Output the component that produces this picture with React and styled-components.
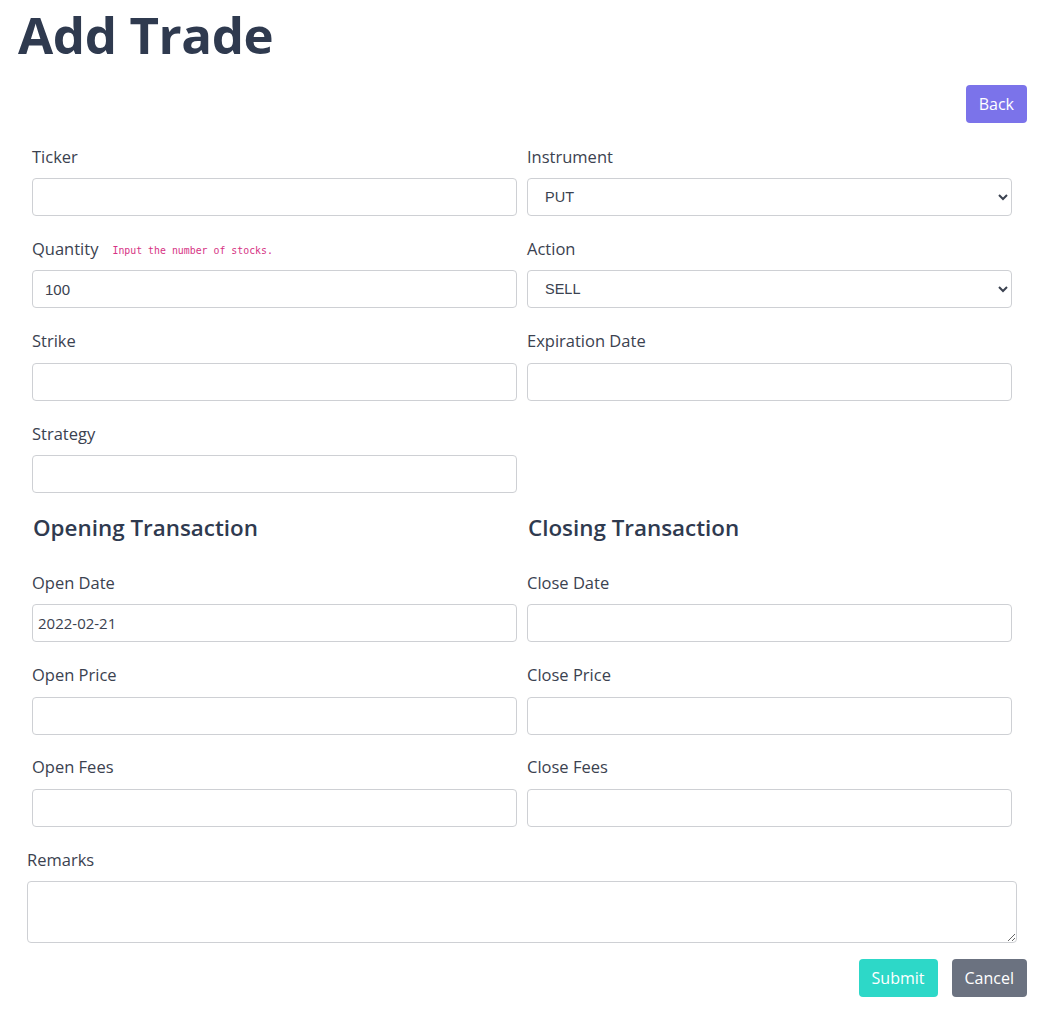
import React from "react";
import styled, { createGlobalStyle } from "styled-components";

const Global = createGlobalStyle`
  html, body { margin: 0; padding: 0; background: #fff; }
  body { font-family: "Open Sans", "Noto Sans", sans-serif; color: #3b4250; }
  * { box-sizing: border-box; }
`;

const Page = styled.div`
  padding: 0 19px 0 18px;
`;

const Title = styled.h1`
  margin: 0;
  padding-top: 2px;
  font-size: 51px;
  line-height: 64px;
  font-weight: 700;
  color: #2f3a4f;
  letter-spacing: -0.4px;
`;

const TopBar = styled.div`
  display: flex;
  justify-content: flex-end;
  margin-top: 19px;
`;

const Button = styled.button`
  height: 38px;
  padding: 0 13px;
  border: none;
  border-radius: 4px;
  font-family: "Open Sans", sans-serif;
  font-size: 16px;
  color: #fff;
  background: ${(p) => p.$bg};
  cursor: pointer;
`;

const Form = styled.form`
  margin-top: 21px;
  padding: 0 10px 0 9px;
`;

const Grid = styled.div`
  display: grid;
  grid-template-columns: 1fr 1fr;
`;

const Field = styled.div`
  padding: 0 5px;
  margin-bottom: ${(p) => (p.$mb != null ? p.$mb : 20.4)}px;
`;

const LabelRow = styled.div`
  display: flex;
  align-items: center;
  height: 24px;
  margin-bottom: ${(p) => p.$mb || 10}px;
`;

const Label = styled.label`
  font-size: 16.5px;
  line-height: 24px;
  padding-top: 1px;
  color: #3b4250;
`;

const Hint = styled.code`
  margin-left: 14px;
  margin-top: 4px;
  font-family: "DejaVu Sans Mono", "Liberation Mono", monospace;
  font-size: 9.9px;
  color: #d63384;
`;

const Input = styled.input`
  display: block;
  width: 100%;
  height: 38px;
  padding: 0 ${(p) => p.$pad || 12}px;
  border: 1px solid #ced0d4;
  border-radius: 4px;
  font-family: ${(p) => (p.$date ? '"Open Sans", sans-serif' : '"Liberation Sans", Arial, sans-serif')};
  font-size: 15px;
  color: #3b4250;
  background: #fff;
  outline: none;
`;

const Select = styled.select`
  display: block;
  width: 100%;
  height: 38px;
  padding: 0 12px 0 13px;
  border: 1px solid #ced0d4;
  border-radius: 4px;
  font-family: "Liberation Sans", Arial, sans-serif;
  font-size: 14.5px;
  color: #3b4250;
  background: #fff;
  outline: none;
`;

const SectionTitle = styled.h3`
  margin: 19px 0 26px;
  padding: 0 6px;
  font-size: 22.4px;
  line-height: 32px;
  font-weight: 600;
  color: #2f3a4f;
`;

const Remarks = styled.div`
  margin-top: 0;
`;

const TextArea = styled.textarea`
  display: block;
  width: 100%;
  height: 62px;
  border: 1px solid #ced0d4;
  border-radius: 4px;
  resize: vertical;
  font-family: "Open Sans", sans-serif;
  outline: none;
`;

const Actions = styled.div`
  display: flex;
  justify-content: flex-end;
  gap: 14px;
  margin-top: 16px;
  margin-right: -10px;
`;

function TextField({ label, hint, value, mb, date, pad }) {
  return (
    <Field $mb={mb}>
      <LabelRow>
        <Label>{label}</Label>
        {hint && <Hint>{hint}</Hint>}
      </LabelRow>
      <Input defaultValue={value} $date={date} $pad={pad} />
    </Field>
  );
}

function SelectField({ label, options }) {
  return (
    <Field>
      <LabelRow>
        <Label>{label}</Label>
      </LabelRow>
      <Select defaultValue={options[0]}>
        {options.map((o) => (
          <option key={o}>{o}</option>
        ))}
      </Select>
    </Field>
  );
}

export default function App() {
  return (
    <>
      <Global />
      <Page>
        <Title>Add Trade</Title>
        <TopBar>
          <Button $bg="#7b73ea" type="button">Back</Button>
        </TopBar>
        <Form onSubmit={(e) => e.preventDefault()}>
          <Grid>
            <TextField label="Ticker" />
            <SelectField label="Instrument" options={["PUT", "CALL", "STOCK"]} />
            <TextField label="Quantity" hint="Input the number of stocks." value="100" />
            <SelectField label="Action" options={["SELL", "BUY"]} />
            <TextField label="Strike" />
            <TextField label="Expiration Date" />
            <TextField label="Strategy" mb={0} />
            <div />
            <SectionTitle>Opening Transaction</SectionTitle>
            <SectionTitle>Closing Transaction</SectionTitle>
            <TextField label="Open Date" value="2022-02-21" date pad={5} />
            <TextField label="Close Date" />
            <TextField label="Open Price" />
            <TextField label="Close Price" />
            <TextField label="Open Fees" />
            <TextField label="Close Fees" />
          </Grid>
          <Remarks>
            <LabelRow $mb={10}>
              <Label>Remarks</Label>
            </LabelRow>
            <TextArea />
          </Remarks>
          <Actions>
            <Button $bg="#2dd8c8" type="submit">Submit</Button>
            <Button $bg="#6b7280" type="button">Cancel</Button>
          </Actions>
        </Form>
      </Page>
    </>
  );
}
